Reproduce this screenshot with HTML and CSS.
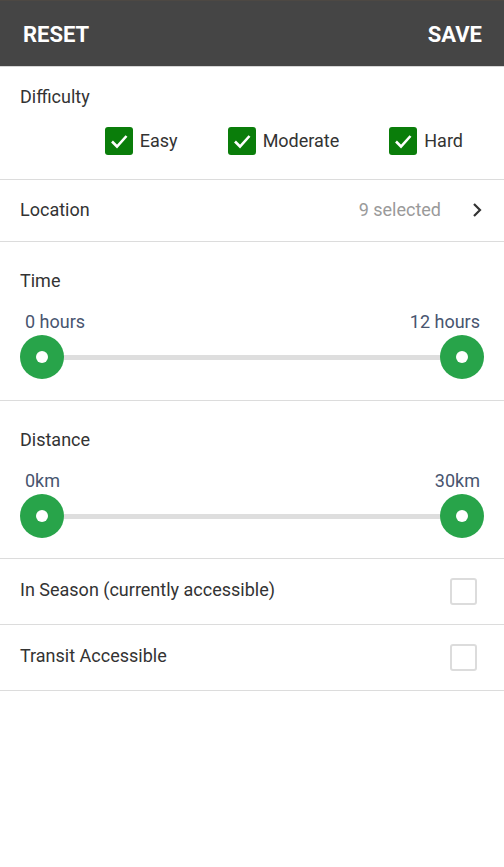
FILE: index.html
```html
<!DOCTYPE html>
<html>
<head>
<meta charset="utf-8">
<link rel="stylesheet" href="styles.css">
</head>
<body>
<header class="topbar">
  <span class="topbtn">RESET</span>
  <span class="topbtn">SAVE</span>
</header>

<section class="block difficulty">
  <div class="title">Difficulty</div>
  <div class="checks">
    <label class="check"><span class="box on"><svg viewBox="0 0 28 28" width="28" height="28"><path d="M7 14.5 L12 19.5 L21.5 9" fill="none" stroke="#fff" stroke-width="2.6"/></svg></span>Easy</label>
    <label class="check"><span class="box on"><svg viewBox="0 0 28 28" width="28" height="28"><path d="M7 14.5 L12 19.5 L21.5 9" fill="none" stroke="#fff" stroke-width="2.6"/></svg></span>Moderate</label>
    <label class="check"><span class="box on"><svg viewBox="0 0 28 28" width="28" height="28"><path d="M7 14.5 L12 19.5 L21.5 9" fill="none" stroke="#fff" stroke-width="2.6"/></svg></span>Hard</label>
  </div>
</section>

<div class="row location">
  <span class="label">Location</span>
  <span class="right">
    <span class="muted">9 selected</span>
    <svg class="chev" viewBox="0 0 12 16" width="12" height="16"><path d="M3 2 L9 8 L3 14" fill="none" stroke="#333" stroke-width="2.2"/></svg>
  </span>
</div>

<section class="block slider-block">
  <div class="title">Time</div>
  <div class="range-labels"><span>0 hours</span><span>12 hours</span></div>
  <div class="slider">
    <span class="thumb"></span>
    <span class="track"></span>
    <span class="thumb"></span>
  </div>
</section>

<section class="block slider-block last">
  <div class="title">Distance</div>
  <div class="range-labels"><span>0km</span><span>30km</span></div>
  <div class="slider">
    <span class="thumb"></span>
    <span class="track"></span>
    <span class="thumb"></span>
  </div>
</section>

<div class="row toggle">
  <span class="label">In Season (currently accessible)</span>
  <span class="empty-box"></span>
</div>
<div class="row toggle">
  <span class="label">Transit Accessible</span>
  <span class="empty-box"></span>
</div>
</body>
</html>
```

FILE: styles.css
```css
* { box-sizing: border-box; }
html, body { margin: 0; padding: 0; background: #fff; }
body {
  font-family: Roboto, "Liberation Sans", Arial, sans-serif;
  font-size: 18px;
  color: #333;
}

.topbar {
  height: 67px;
  background: #454545;
  border-top: 1px solid #4d4843;
  border-bottom: 1px solid #d6d6d6;
  display: flex;
  justify-content: space-between;
  align-items: center;
  padding: 0 22px 0 23px;
}
.topbtn {
  color: #fff;
  font-weight: 700;
  font-size: 22px;
  padding-top: 1px;
}

.block {
  border-bottom: 1px solid #dcdcdc;
  padding: 20px 20px 24px;
}
.title { line-height: 20px; height: 20px; }

.checks {
  margin-top: 20px;
  display: flex;
  justify-content: flex-end;
  gap: 50px;
  padding-right: 21px;
}
.check {
  display: flex;
  align-items: center;
  gap: 7px;
  height: 28px;
  padding-bottom: 2px;
}
.box {
  width: 28px;
  height: 28px;
  border-radius: 3px;
  display: block;
  margin-top: 2px;
}
.box.on { background: #0a7d0a; }
.box svg { display: block; }

.row {
  display: flex;
  align-items: center;
  justify-content: space-between;
  border-bottom: 1px solid #dcdcdc;
  padding: 0 20px;
}
.location { height: 62px; padding-bottom: 2px; }
.right { display: flex; align-items: center; gap: 30px; }
.muted { color: #9a9a9a; }
.chev { display: block; margin-right: 1px; margin-top: 1px; }

.slider-block { padding: 29px 20px 21px; }
.slider-block.last { padding-bottom: 20px; }
.range-labels {
  margin-top: 21px;
  display: flex;
  justify-content: space-between;
  line-height: 20px;
  padding: 0 4px 0 5px;
  color: #48556f;
}
.slider {
  margin-top: 3px;
  display: flex;
  align-items: center;
  height: 44px;
}
.thumb {
  width: 44px;
  height: 44px;
  border-radius: 50%;
  background: #28a44a;
  flex: none;
  display: flex;
  align-items: center;
  justify-content: center;
  position: relative;
  z-index: 1;
}
.thumb::after {
  content: "";
  width: 12px;
  height: 12px;
  border-radius: 50%;
  background: #fff;
}
.track {
  flex: 1;
  height: 5px;
  background: #dedede;
  margin: 0 -2px;
}

.toggle { height: 66px; }
.toggle .label { margin-bottom: 4px; }
.empty-box {
  width: 27px;
  height: 27px;
  border: 2px solid #dcdcdc;
  border-radius: 3px;
  margin-right: 7px;
}
```
